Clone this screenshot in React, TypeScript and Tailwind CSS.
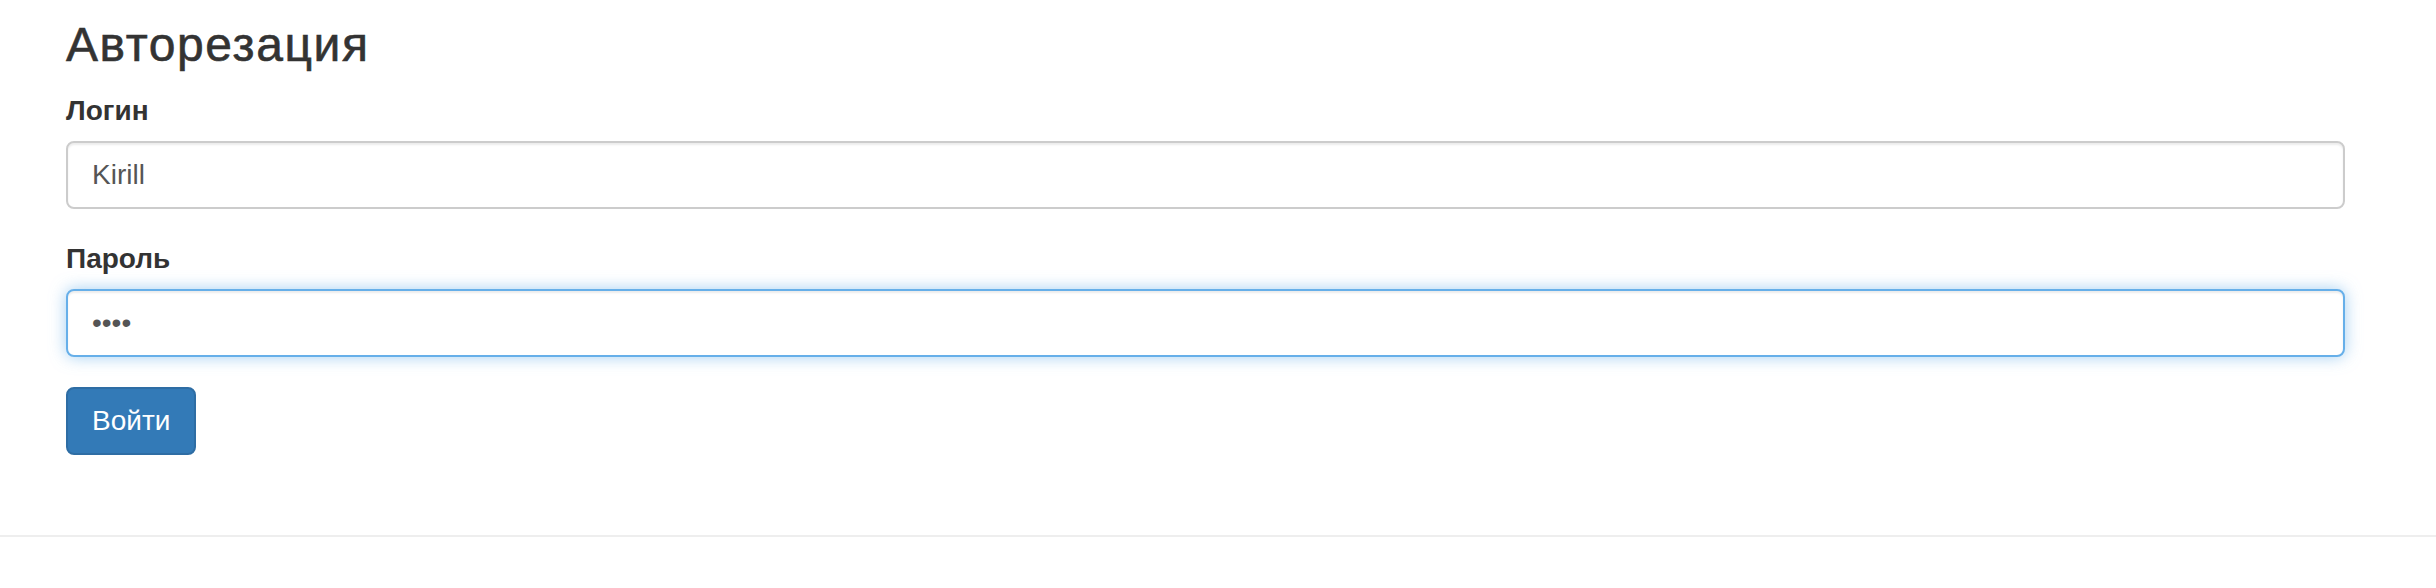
export default function App() {
  return (
    <div className="min-h-[588px] bg-white font-['Liberation_Sans',Arial,sans-serif] text-[#333]">
      <div className="pl-[66px] pr-[91px] pt-[18px]">
        <h3 className="text-[48px] leading-[53px] font-normal tracking-[1.6px] [-webkit-text-stroke:0.6px_#333]">
          Авторезация
        </h3>

        <form className="mt-[20px]" onSubmit={(e) => e.preventDefault()}>
          <div className="mb-[30px]">
            <label className="mb-[10px] block text-[28px] leading-[40px] font-bold">
              Логин
            </label>
            <input
              type="text"
              readOnly
              defaultValue="Kirill"
              className="block h-[68px] w-full rounded-[8px] border-2 border-[#ccc] bg-white px-[24px] text-[28px] text-[#555] shadow-[inset_0_2px_2px_rgba(0,0,0,0.075)] outline-none"
            />
          </div>

          <div className="mb-[30px]">
            <label className="mb-[10px] block text-[28px] leading-[40px] font-bold">
              Пароль
            </label>
            <input
              type="password"
              readOnly
              defaultValue="1234"
              className="block h-[68px] w-full rounded-[8px] border-2 border-[#66afe9] bg-white px-[24px] text-[28px] text-[#555] shadow-[inset_0_2px_2px_rgba(0,0,0,0.075),0_0_16px_rgba(102,175,233,0.6)] outline-none"
            />
          </div>

          <button
            type="submit"
            className="h-[68px] rounded-[8px] border-2 border-[#2e6da4] bg-[#337ab7] px-[24px] text-[28px] leading-[40px] text-white"
          >
            Войти
          </button>
        </form>
      </div>

      <hr className="mt-[80px] border-t-2 border-[#eee]" />
    </div>
  );
}
